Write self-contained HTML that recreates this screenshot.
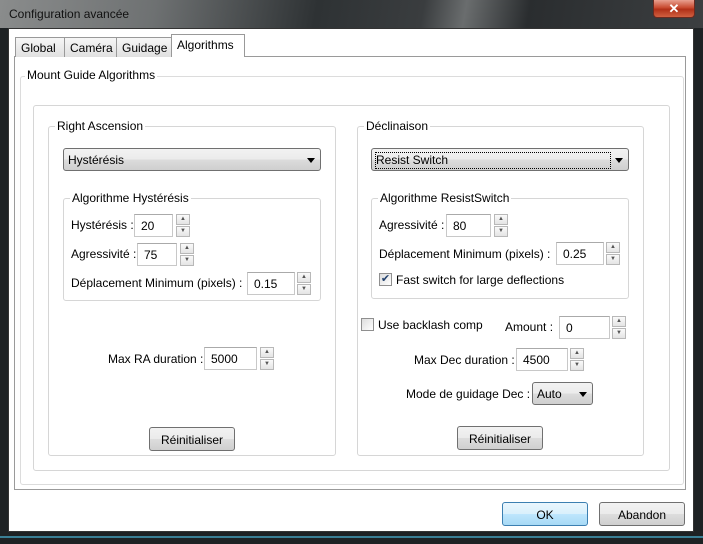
<!DOCTYPE html>
<html><head><meta charset="utf-8"><style>
*{box-sizing:border-box;margin:0;padding:0}
body{width:703px;height:544px;overflow:hidden;background:#1e2224;font-family:"Liberation Sans",sans-serif;font-size:12px;color:#000;position:relative}
.a{position:absolute}
.title{left:0;top:0;width:703px;height:28px;background:linear-gradient(100deg,#8a8c8c 0,#6e7172 22%,#2e3234 45%,#3a3d3f 60%,#6a6d6e 66%,#2a2d2f 75%,#3c3f41 100%)}
.tt{left:9px;top:7px;font-size:12px;color:#111}
.close{left:653px;top:0;width:42px;height:18px;border:1px solid #6a2a20;border-top:none;border-radius:0 0 4px 4px;background:linear-gradient(#e8a090,#c84a30 45%,#b03018 55%,#d06040);color:#fff;font-weight:bold;text-align:center;font-size:13px;line-height:17px}
.client{left:8px;top:28px;width:686px;height:504px;background:#fff;border:1px solid #333}
.bot{left:0;top:536px;width:703px;height:2px;background:#3a7f95}
.tab{top:37px;height:20px;border:1px solid #999;border-bottom:none;background:linear-gradient(#f6f6f6,#e0e0e0);padding:3px 0 0 5px}
.tab.on{top:34px;height:23px;background:#fff;z-index:2}
.panel{left:14px;top:56px;width:672px;height:434px;border:1px solid #9a9a9a;background:#fff}
.fr{border:1px solid #d6d6d6;border-radius:3px}
.lbl{background:#fff;padding:0 2px}
.inp{border:1px solid #c8c8c8;border-top-color:#aaa;background:#fff;height:23px;padding:4px 0 0 6px}
.sp{width:14px;height:23px}
.sp div{width:14px;height:11px;border:1px solid #b8b8b8;background:linear-gradient(#fafafa,#e4e4e4);font-size:6px;color:#555;text-align:center;line-height:9px;margin-bottom:1px}
.combo{height:23px;border:1px solid #707070;border-radius:3px;background:linear-gradient(#f2f2f2 0,#ebebeb 50%,#dcdcdc 51%,#cfcfcf);padding:4px 0 0 4px}
.arr{position:absolute;right:5px;top:9px;width:0;height:0;border-left:4px solid transparent;border-right:4px solid transparent;border-top:5px solid #000}
.btn{height:24px;border:1px solid #707070;border-radius:3px;background:linear-gradient(#f2f2f2 0,#ebebeb 50%,#dddddd 51%,#cfcfcf);text-align:center;padding-top:5px}
.cb{width:13px;height:13px;border:1px solid #8f8f8f;background:linear-gradient(135deg,#ddd,#fff)}
</style></head><body>
<div class="a title"></div>
<div class="a tt">Configuration avancée</div>
<div class="a close">✕</div>
<div class="a client"></div>
<div class="a bot"></div>

<div class="a panel"></div>
<div class="a tab" style="left:15px;width:50px">Global</div>
<div class="a tab" style="left:64px;width:53px">Caméra</div>
<div class="a tab" style="left:116px;width:56px">Guidage</div>
<div class="a tab on" style="left:171px;width:74px">Algorithms</div>

<div class="a fr" style="left:20px;top:76px;width:664px;height:409px;border-color:#dcdcdc"></div>
<div class="a lbl" style="left:25px;top:68px">Mount Guide Algorithms</div>
<div class="a fr" style="left:33px;top:105px;width:637px;height:366px"></div>

<!-- RA -->
<div class="a fr" style="left:48px;top:126px;width:288px;height:330px"></div>
<div class="a lbl" style="left:55px;top:119px">Right Ascension</div>
<div class="a combo" style="left:63px;top:148px;width:258px">Hystérésis<div class="arr"></div></div>
<div class="a fr" style="left:63px;top:198px;width:258px;height:103px"></div>
<div class="a lbl" style="left:70px;top:191px">Algorithme Hystérésis</div>
<div class="a" style="left:71px;top:218px">Hystérésis :</div>
<div class="a inp" style="left:134px;top:214px;width:39px">20</div>
<div class="a sp" style="left:176px;top:214px"><div>▲</div><div>▼</div></div>
<div class="a" style="left:71px;top:247px">Agressivité :</div>
<div class="a inp" style="left:137px;top:243px;width:40px">75</div>
<div class="a sp" style="left:180px;top:243px"><div>▲</div><div>▼</div></div>
<div class="a" style="left:71px;top:276px">Déplacement Minimum (pixels) :</div>
<div class="a inp" style="left:247px;top:272px;width:48px">0.15</div>
<div class="a sp" style="left:297px;top:272px"><div>▲</div><div>▼</div></div>
<div class="a" style="left:108px;top:352px">Max RA duration :</div>
<div class="a inp" style="left:204px;top:347px;width:53px">5000</div>
<div class="a sp" style="left:260px;top:347px"><div>▲</div><div>▼</div></div>
<div class="a btn" style="left:149px;top:427px;width:86px">Réinitialiser</div>

<!-- Dec -->
<div class="a fr" style="left:357px;top:126px;width:287px;height:330px"></div>
<div class="a lbl" style="left:364px;top:119px">Déclinaison</div>
<div class="a combo" style="left:371px;top:148px;width:258px"><span style="outline:1px dotted #000;display:inline-block;width:234px;height:15px;margin-top:-1px">Resist Switch</span><div class="arr"></div></div>
<div class="a fr" style="left:371px;top:198px;width:258px;height:101px"></div>
<div class="a lbl" style="left:378px;top:191px">Algorithme ResistSwitch</div>
<div class="a" style="left:379px;top:218px">Agressivité :</div>
<div class="a inp" style="left:446px;top:214px;width:45px">80</div>
<div class="a sp" style="left:494px;top:214px"><div>▲</div><div>▼</div></div>
<div class="a" style="left:379px;top:247px">Déplacement Minimum (pixels) :</div>
<div class="a inp" style="left:556px;top:242px;width:48px">0.25</div>
<div class="a sp" style="left:606px;top:242px"><div>▲</div><div>▼</div></div>
<div class="a cb" style="left:379px;top:273px;font-size:11px;line-height:10px;color:#23426e;text-align:center">✔</div>
<div class="a" style="left:396px;top:273px">Fast switch for large deflections</div>
<div class="a cb" style="left:361px;top:318px"></div>
<div class="a" style="left:378px;top:318px">Use backlash comp</div>
<div class="a" style="left:505px;top:320px">Amount :</div>
<div class="a inp" style="left:559px;top:316px;width:51px">0</div>
<div class="a sp" style="left:612px;top:316px"><div>▲</div><div>▼</div></div>
<div class="a" style="left:414px;top:353px">Max Dec duration :</div>
<div class="a inp" style="left:516px;top:348px;width:52px">4500</div>
<div class="a sp" style="left:570px;top:348px"><div>▲</div><div>▼</div></div>
<div class="a" style="left:406px;top:387px">Mode de guidage Dec :</div>
<div class="a combo" style="left:532px;top:382px;width:61px">Auto<div class="arr"></div></div>
<div class="a btn" style="left:457px;top:426px;width:86px">Réinitialiser</div>

<div class="a btn" style="left:502px;top:502px;width:86px;border-color:#3c7fb1;background:linear-gradient(#eaf6fd,#d9f0fc 50%,#bee6fd 51%,#a7d9f5)">OK</div>
<div class="a btn" style="left:599px;top:502px;width:86px">Abandon</div>
</body></html>
